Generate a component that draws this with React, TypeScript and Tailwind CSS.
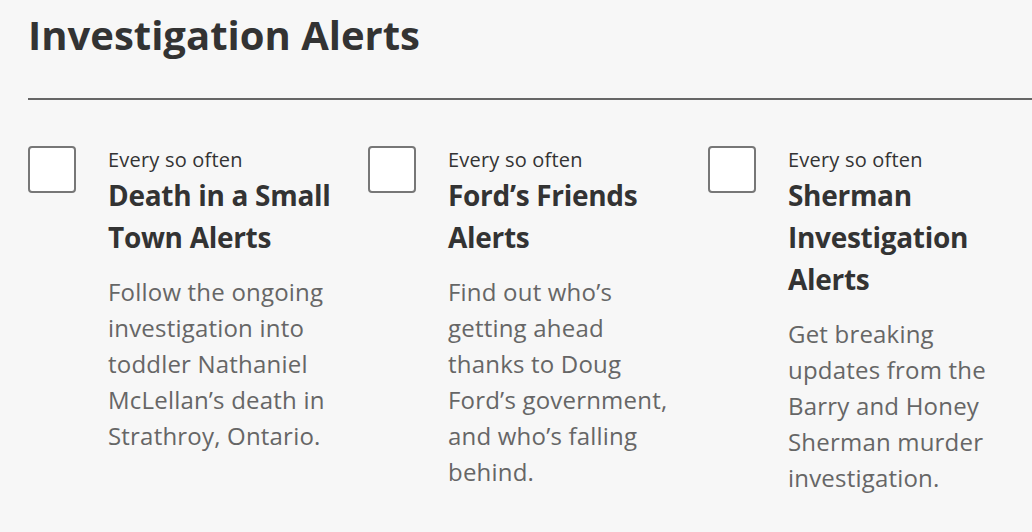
const alerts = [
  {
    id: "death",
    title: ["Death in a Small", "Town Alerts"],
    body: [
      "Follow the ongoing",
      "investigation into",
      "toddler Nathaniel",
      "McLellan’s death in",
      "Strathroy, Ontario.",
    ],
  },
  {
    id: "ford",
    title: ["Ford’s Friends", "Alerts"],
    body: [
      "Find out who’s",
      "getting ahead",
      "thanks to Doug",
      "Ford’s government,",
      "and who’s falling",
      "behind.",
    ],
  },
  {
    id: "sherman",
    title: ["Sherman", "Investigation", "Alerts"],
    body: [
      "Get breaking",
      "updates from the",
      "Barry and Honey",
      "Sherman murder",
      "investigation.",
    ],
  },
];

export default function App() {
  return (
    <div className="min-h-screen bg-[#f7f7f7] pl-[28px] font-['Open_Sans',sans-serif] overflow-hidden">
      <h1 className="pt-[11px] text-[40px] leading-[48px] font-bold text-[#333]">
        Investigation Alerts
      </h1>

      <div className="mt-[39px] border-t-2 border-[#666]" />

      <div className="mt-[46px] grid grid-cols-[340px_340px_340px]">
        {alerts.map((a) => (
          <label key={a.id} className="flex items-start gap-[32px] cursor-pointer">
            <input type="checkbox" className="peer sr-only" />
            <span className="block w-[48px] h-[47px] shrink-0 rounded-[4px] border-2 border-[#777] bg-white" />
            <div className="w-[240px]">
              <p className="text-[20px] leading-[28px] tracking-[0.2px] text-[#333]">Every so often</p>
              <h2 className="text-[28px] leading-[42px] font-bold tracking-[-0.3px] text-[#333]">
                {a.title.map((t) => (
                  <span key={t} className="block whitespace-nowrap">{t}</span>
                ))}
              </h2>
              <p className="mt-[16px] text-[24px] leading-[36px] tracking-[0.2px] text-[#666]">
                {a.body.map((t) => (
                  <span key={t} className="block whitespace-nowrap">{t}</span>
                ))}
              </p>
            </div>
          </label>
        ))}
      </div>
    </div>
  );
}
